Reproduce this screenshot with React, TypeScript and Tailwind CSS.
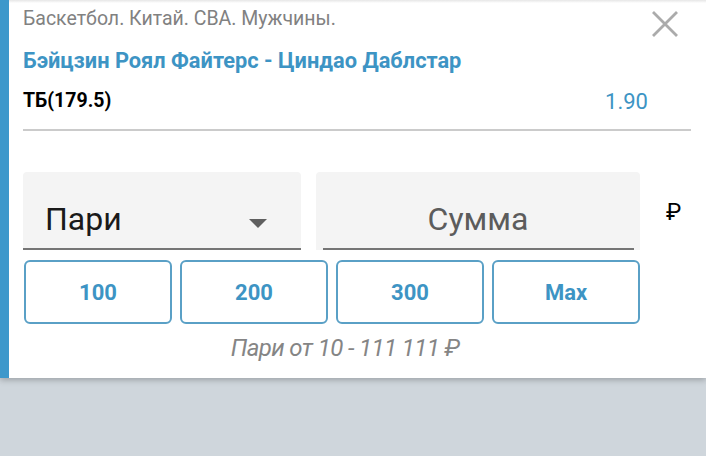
const amounts = ["100", "200", "300", "Max"];

export default function App() {
    return (
        <div className="w-[706px] h-[456px] bg-[#cfd6dc] overflow-hidden" style={{fontFamily: "Roboto, 'Noto Sans', sans-serif"}}>
            <div className="relative bg-white border-l-[9px] border-[#3d98cb] h-[378px] shadow-[0_2px_6px_rgba(0,0,0,0.25)] pl-[14px] pr-[15px]">
                <div className="h-[3px] -ml-[14px] -mr-[15px] bg-gradient-to-b from-[#e6e6e6] to-white"></div>
                <button className="absolute right-[28px] top-[11px]">
                    <svg width="26" height="26" viewBox="0 0 26 26" fill="none" stroke="#ababab" strokeWidth="2.8">
                        <path d="M1 1L25 25M25 1L1 25"/>
                    </svg>
                </button>
                <p className="text-[19.5px] leading-[24px] text-[#818181] pt-[4px]">
                    Баскетбол. Китай. СВА. Мужчины.
                </p>
                <h1 className="text-[21.8px] leading-[28px] font-bold text-[#3d94c4] mt-[16px]">
                    Бэйцзин Роял Файтерс - Циндао Даблстар
                </h1>
                <div className="flex items-center justify-between h-[28px] mt-[12px] pr-[43px]">
                    <span className="text-[19.5px] font-bold text-black">ТБ(179.5)</span>
                    <span className="text-[22px] text-[#3d94c4] mt-[1px]">1.90</span>
                </div>
                <div className="h-[2px] bg-[#cbcbcb] mt-[14px]"></div>
                <div className="flex items-start mt-[41px]">
                    <div className="w-[278px] h-[78px] bg-[#f4f4f4] rounded-t-[4px] border-b-2 border-[#757575] flex items-end justify-between pl-[22px] pr-[34px] pb-[13px]">
                        <span className="text-[32px] leading-[32px] text-[#1a1a1a]">Пари</span>
                        <span className="w-0 h-0 border-l-[9px] border-r-[9px] border-t-[9px] border-l-transparent border-r-transparent border-t-[#5f5f5f] mb-[7px]"></span>
                    </div>
                    <div className="ml-[15px] w-[324px] h-[78px] bg-[#f4f4f4] rounded-t-[4px] flex flex-col">
                        <div className="flex-1 flex items-end justify-center pb-[13px]">
                            <span className="text-[32px] leading-[32px] text-[#5c5c5c]">Сумма</span>
                        </div>
                        <div className="h-[2px] bg-[#757575] ml-[7px] mr-[6px]"></div>
                    </div>
                    <span className="ml-[26px] mt-[27px] text-[23px] leading-[28px] text-black">₽</span>
                </div>
                <div className="flex gap-[8px] mt-[10px] pl-[1px]">
                    {amounts.map(amount =>
                        <button key={amount} className="w-[148px] h-[64px] border-2 border-[#5aa0c6] rounded-[6px] text-[22px] font-bold text-[#3d94c4]">
                            {amount}
                        </button>
                    )}
                </div>
                <p className="text-center text-[24px] leading-[28px] italic text-[#858585] tracking-[-0.6px] mt-[10px] pr-[24px]">
                    Пари от 10 - 111 111 ₽
                </p>
            </div>
        </div>
    );
}
